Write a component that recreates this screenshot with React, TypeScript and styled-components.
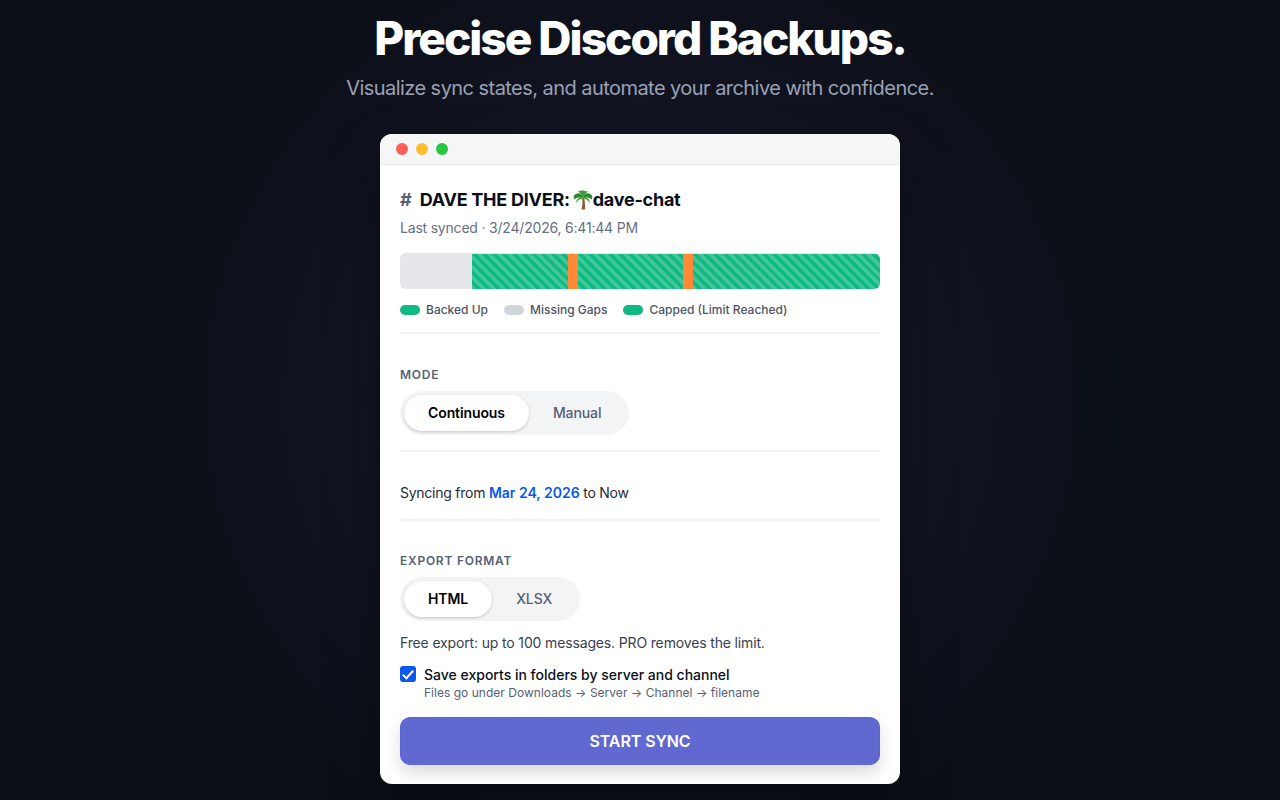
import React from "react";
import styled, { createGlobalStyle } from "styled-components";

const Global = createGlobalStyle`
  html, body { margin: 0; padding: 0; height: 100%; }
  body {
    font-family: Inter, "Noto Sans", sans-serif;
    background: radial-gradient(circle at 50% 50%, #1a1a2e 0, #0b0f17 500px);
    min-height: 800px;
    overflow: hidden;
  }
`;

const Page = styled.main`
  display: flex;
  flex-direction: column;
  align-items: center;
  height: 800px;
  overflow: hidden;
`;

const Title = styled.h1`
  margin: 8px 0 0;
  color: #fff;
  font-size: 46px;
  line-height: 60px;
  font-weight: 800;
  letter-spacing: -2px;
`;

const Subtitle = styled.p`
  margin: 5px 0 0;
  color: #9aa1b5;
  font-size: 20px;
  line-height: 30px;
  letter-spacing: -0.55px;
`;

const Win = styled.section`
  margin-top: 31px;
  width: 520px;
  height: 650px;
  flex: none;
  border-radius: 12px;
  background: #fff;
  overflow: hidden;
  box-shadow: 0 25px 50px rgba(0, 0, 0, 0.35);
`;

const TitleBar = styled.div`
  display: flex;
  align-items: center;
  gap: 8px;
  height: 30px;
  padding: 0 16px;
  background: #f6f6f7;
  border-bottom: 1px solid #e8e9ee;
`;

const Dot = styled.span<{ $c: string }>`
  width: 12px;
  height: 12px;
  border-radius: 50%;
  background: ${(p) => p.$c};
`;

const Body = styled.div`
  padding: 21px 20px 0;
`;

const Heading = styled.h2`
  display: flex;
  align-items: center;
  margin: 0;
  height: 28px;
  color: #0b0f19;
  font-size: 18px;
  font-weight: 700;
  line-height: 28px;
  letter-spacing: -0.25px;
`;

const Hash = styled.span`
  color: #566074;
  margin-right: 8px;
  letter-spacing: 0;
`;

const Palm = styled.svg`
  width: 20px;
  height: 20px;
  margin: -1px 0 0 3px;
  flex: none;
`;

const Muted = styled.p`
  margin: 4px 0 0;
  color: #667085;
  font-size: 14px;
  line-height: 20px;
  letter-spacing: -0.2px;
`;

const Bar = styled.div`
  display: flex;
  box-sizing: border-box;
  height: 36px;
  margin-top: 15px;
  padding-top: 1px;
  border-radius: 6px;
  overflow: hidden;
  background: #e5e7eb;
`;

const Gap = styled.div<{ $w: number }>`
  width: ${(p) => p.$w}px;
  flex: none;
`;

const Seg = styled.div<{ $w: number }>`
  width: ${(p) => p.$w}px;
  flex: none;
  background-color: #10b981;
  background-image: repeating-linear-gradient(
    45deg,
    rgba(255, 255, 255, 0.2) 0 3.5px,
    transparent 3.5px 7px
  );
`;

const Capped = styled.div`
  width: 10px;
  flex: none;
  background: #ff8a33;
`;

const Legend = styled.div`
  display: flex;
  gap: 16px;
  margin-top: 12px;
`;

const LegendItem = styled.span`
  display: flex;
  align-items: center;
  gap: 6px;
  color: #4b5563;
  font-size: 12px;
  font-weight: 500;
  line-height: 18px;
`;

const Swatch = styled.i<{ $c: string }>`
  width: 20px;
  height: 10px;
  border-radius: 5px;
  background: ${(p) => p.$c};
`;

const Divider = styled.hr<{ $top: number }>`
  margin: ${(p) => p.$top}px 0 0;
  border: 0;
  height: 2px;
  background: #f0f1f3;
`;

const Label = styled.div<{ $top: number }>`
  margin-top: ${(p) => p.$top}px;
  color: #566074;
  font-size: 12px;
  line-height: 16px;
  font-weight: 600;
  letter-spacing: 0.75px;
  text-transform: uppercase;
`;

const Toggle = styled.div`
  display: inline-flex;
  margin-top: 8px;
  padding: 4px;
  height: 44px;
  box-sizing: border-box;
  border-radius: 22px;
  background: #f3f4f6;
`;

const Option = styled.button<{ $on?: boolean }>`
  border: 0;
  height: 36px;
  padding: 0 24px 2px;
  border-radius: 18px;
  font-family: inherit;
  font-size: 14px;
  letter-spacing: -0.1px;
  font-weight: ${(p) => (p.$on ? 600 : 500)};
  color: ${(p) => (p.$on ? "#000" : "#566074")};
  background: ${(p) => (p.$on ? "#fff" : "transparent")};
  box-shadow: ${(p) => (p.$on ? "0 1px 3px rgba(0,0,0,.2)" : "none")};
`;

const Sync = styled.p`
  margin: 31px 0 0;
  color: #1f2937;
  font-size: 14px;
  line-height: 20px;
  letter-spacing: -0.25px;
`;

const DateLink = styled.span`
  color: #0b57f0;
  font-weight: 600;
  letter-spacing: 0;
`;

const Note = styled.p`
  margin: 12px 0 0;
  color: #374151;
  font-size: 14px;
  line-height: 20px;
  letter-spacing: -0.15px;
`;

const CheckRow = styled.label`
  display: flex;
  gap: 8px;
  margin-top: 12px;
`;

const Box = styled.input`
  appearance: none;
  width: 16px;
  height: 16px;
  margin: 1px 0 0;
  flex: none;
  border-radius: 3px;
  background: #0b57f0;
  display: grid;
  place-items: center;
  &::after {
    content: "";
    width: 4px;
    height: 9px;
    margin-top: -2px;
    border: solid #fff;
    border-width: 0 2.5px 2.5px 0;
    transform: rotate(42deg);
  }
`;

const CheckTitle = styled.div`
  color: #0b0f19;
  font-size: 14px;
  font-weight: 500;
  line-height: 20px;
`;

const CheckSub = styled.div`
  color: #566074;
  font-size: 12px;
  line-height: 16px;
  letter-spacing: 0.02px;
`;

const Start = styled.button`
  display: block;
  width: 100%;
  height: 48px;
  margin-top: 16px;
  border: 1px solid #5865d8;
  border-radius: 10px;
  background: #5f69d0;
  color: #fff;
  font-family: inherit;
  font-size: 16px;
  font-weight: 600;
  letter-spacing: -0.1px;
  box-shadow: 0 8px 16px rgba(0, 0, 0, 0.14);
`;

export default function App() {
  return (
    <Page>
      <Global />
      <Title>Precise Discord Backups.</Title>
      <Subtitle>Visualize sync states, and automate your archive with confidence.</Subtitle>
      <Win>
        <TitleBar>
          <Dot $c="#ff5f57" />
          <Dot $c="#febc2e" />
          <Dot $c="#28c840" />
        </TitleBar>
        <Body>
          <Heading>
            <Hash>#</Hash>
            DAVE THE DIVER:
            <Palm viewBox="0 0 20 20" aria-hidden="true">
              <path d="M9 7.5 C9.8 11 9.6 15.5 8.4 19.5 L12 19.5 C12.2 15 11.8 11 11 7.5 Z" fill="#8a5a33" />
              <path d="M10 7 C8 2.5 3.5 2 0.8 5.8 C0.6 6.8 0.6 8.2 1.2 9.6 C3 7.6 6.5 6.6 10 7.6 Z" fill="#2f8a34" />
              <path d="M10 7 C12 2.5 16.5 2 19.2 5.8 C19.4 6.8 19.4 8.2 18.8 9.6 C17 7.6 13.5 6.6 10 7.6 Z" fill="#2f8a34" />
              <path d="M10 7.4 C7.5 6.4 3.6 8 3 12.8 C5 10.4 7.5 8.6 10 8.4 Z" fill="#4ea53c" />
              <path d="M10 7.4 C12.5 6.4 16.4 8 17 12.8 C15 10.4 12.5 8.6 10 8.4 Z" fill="#4ea53c" />
              <path d="M10 7.2 C8 4 6.2 1.6 5 1.2 C8 0.4 10 0.4 12 1 C13.5 1.2 14.5 1.4 15 1.8 C13 3 11.4 5 10 7.2 Z" fill="#3f9b3c" />
            </Palm>
            dave-chat
          </Heading>
          <Muted>Last synced · 3/24/2026, 6:41:44 PM</Muted>
          <Bar>
            <Gap $w={72} />
            <Seg $w={96} />
            <Capped />
            <Seg $w={105} />
            <Capped />
            <Seg $w={187} />
          </Bar>
          <Legend>
            <LegendItem><Swatch $c="#10b981" />Backed Up</LegendItem>
            <LegendItem><Swatch $c="#d1d5db" />Missing Gaps</LegendItem>
            <LegendItem><Swatch $c="#10b981" />Capped (Limit Reached)</LegendItem>
          </Legend>
          <Divider $top={13} />
          <Label $top={33}>Mode</Label>
          <Toggle>
            <Option $on>Continuous</Option>
            <Option>Manual</Option>
          </Toggle>
          <Divider $top={15} />
          <Sync>
            Syncing from <DateLink>Mar 24, 2026</DateLink> to Now
          </Sync>
          <Divider $top={16} />
          <Label $top={32}>Export Format</Label>
          <Toggle>
            <Option $on>HTML</Option>
            <Option>XLSX</Option>
          </Toggle>
          <Note>Free export: up to 100 messages. PRO removes the limit.</Note>
          <CheckRow>
            <Box type="checkbox" defaultChecked />
            <div>
              <CheckTitle>Save exports in folders by server and channel</CheckTitle>
              <CheckSub>Files go under Downloads → Server → Channel → filename</CheckSub>
            </div>
          </CheckRow>
          <Start>START SYNC</Start>
        </Body>
      </Win>
    </Page>
  );
}
